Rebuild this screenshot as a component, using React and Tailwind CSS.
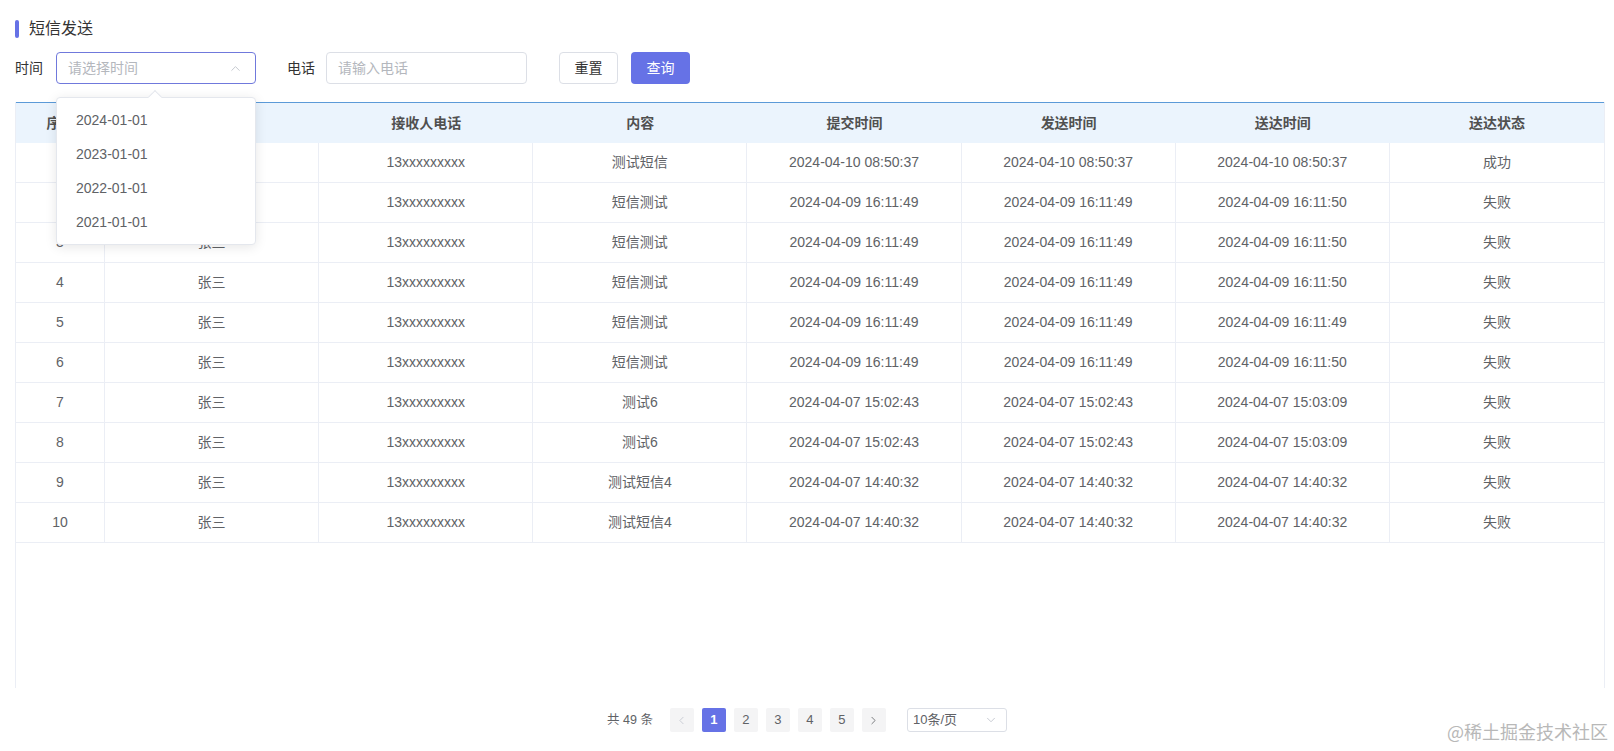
import { ChevronUp, ChevronDown, ChevronLeft, ChevronRight } from 'lucide-react';

const rows = [
  ['测试短信', '2024-04-10 08:50:37', '2024-04-10 08:50:37', '2024-04-10 08:50:37', '成功'],
  ['短信测试', '2024-04-09 16:11:49', '2024-04-09 16:11:49', '2024-04-09 16:11:50', '失败'],
  ['短信测试', '2024-04-09 16:11:49', '2024-04-09 16:11:49', '2024-04-09 16:11:50', '失败'],
  ['短信测试', '2024-04-09 16:11:49', '2024-04-09 16:11:49', '2024-04-09 16:11:50', '失败'],
  ['短信测试', '2024-04-09 16:11:49', '2024-04-09 16:11:49', '2024-04-09 16:11:49', '失败'],
  ['短信测试', '2024-04-09 16:11:49', '2024-04-09 16:11:49', '2024-04-09 16:11:50', '失败'],
  ['测试6', '2024-04-07 15:02:43', '2024-04-07 15:02:43', '2024-04-07 15:03:09', '失败'],
  ['测试6', '2024-04-07 15:02:43', '2024-04-07 15:02:43', '2024-04-07 15:03:09', '失败'],
  ['测试短信4', '2024-04-07 14:40:32', '2024-04-07 14:40:32', '2024-04-07 14:40:32', '失败'],
  ['测试短信4', '2024-04-07 14:40:32', '2024-04-07 14:40:32', '2024-04-07 14:40:32', '失败'],
];

const headers = ['序号', '接收人', '接收人电话', '内容', '提交时间', '发送时间', '送达时间', '送达状态'];
const years = ['2024-01-01', '2023-01-01', '2022-01-01', '2021-01-01'];

export default function App() {
  return (
    <div className="relative w-full h-[751px] bg-white overflow-hidden font-['Liberation_Sans','Noto_Sans_CJK_SC',sans-serif] text-[14px] text-[#606266]">
      {/* Title */}
      <div className="flex items-center h-[18px] mt-[20px] ml-[15px]">
        <div className="w-[4px] h-[18px] rounded-sm bg-[#6672e6]"></div>
        <span className="ml-[10px] text-[16px] text-[#333]">短信发送</span>
      </div>

      {/* Filters */}
      <div className="flex items-center h-[32px] mt-[14px] ml-[15px]">
        <span className="text-[#333]">时间</span>
        <div className="relative ml-[13px] w-[200px] h-[32px] border border-[#7079dc] rounded-[4px] flex items-center justify-between pl-[11px] pr-[12px]">
          <span className="text-[#b4b7bd]">请选择时间</span>
          <ChevronUp className="w-[15px] h-[15px] text-[#c0c4cc]" strokeWidth={1.5} />
        </div>
        <span className="ml-[31px] text-[#333]">电话</span>
        <div className="ml-[11px] w-[201px] h-[32px] border border-[#dcdfe6] rounded-[4px] flex items-center pl-[11px]">
          <span className="text-[#b4b7bd]">请输入电话</span>
        </div>
        <button className="ml-[32px] w-[59px] h-[32px] border border-[#dcdfe6] rounded-[4px] bg-white text-[#333]">重置</button>
        <button className="ml-[13px] w-[59px] h-[32px] rounded-[4px] bg-[#6672e6] text-white">查询</button>
      </div>

      {/* Table */}
      <div className="mt-[18px] ml-[15px] w-[1590px] h-[586px] border-x border-[#ebeef5]">
        <div className="grid grid-cols-[89px_repeat(7,minmax(0,1fr))] h-[41px] bg-[#ebf4fd] border-t border-[#5b9ad8] font-bold text-[#505050]">
          {headers.map((h) => (
            <div key={h} className="flex items-center justify-center">{h}</div>
          ))}
        </div>
        {rows.map((r, i) => (
          <div key={i} className="grid grid-cols-[89px_repeat(7,minmax(0,1fr))] h-[40px] border-b border-[#ebeef5]">
            <div className="flex items-center justify-center border-r border-[#ebeef5]">{i + 1}</div>
            <div className="flex items-center justify-center border-r border-[#ebeef5]">张三</div>
            <div className="flex items-center justify-center border-r border-[#ebeef5]">13xxxxxxxxx</div>
            <div className="flex items-center justify-center border-r border-[#ebeef5]">{r[0]}</div>
            <div className="flex items-center justify-center border-r border-[#ebeef5]">{r[1]}</div>
            <div className="flex items-center justify-center border-r border-[#ebeef5]">{r[2]}</div>
            <div className="flex items-center justify-center border-r border-[#ebeef5]">{r[3]}</div>
            <div className="flex items-center justify-center">{r[4]}</div>
          </div>
        ))}
      </div>

      {/* Pagination */}
      <div className="flex items-center justify-center h-[24px] mt-[20px] text-[13px]">
        <span className="mr-[17px] text-[12.5px] text-[#606266]">共 49 条</span>
        <div className="flex items-center gap-[8px]">
          <div className="w-[24px] h-[24px] bg-[#f4f4f5] rounded-[2px] flex items-center justify-center">
            <ChevronLeft className="w-[13px] h-[13px] text-[#c0c4cc]" strokeWidth={1.5} />
          </div>
          <div className="w-[24px] h-[24px] bg-[#6672e6] rounded-[2px] flex items-center justify-center text-white font-bold">1</div>
          {[2, 3, 4, 5].map((n) => (
            <div key={n} className="w-[24px] h-[24px] bg-[#f4f4f5] rounded-[2px] flex items-center justify-center text-[#606266]">{n}</div>
          ))}
          <div className="w-[24px] h-[24px] bg-[#f4f4f5] rounded-[2px] flex items-center justify-center">
            <ChevronRight className="w-[13px] h-[13px] text-[#606266]" strokeWidth={1.5} />
          </div>
        </div>
        <div className="ml-[21px] w-[100px] h-[24px] border border-[#dcdfe6] rounded-[3px] flex items-center justify-between pl-[5px] pr-[8px]">
          <span className="text-[#606266]">10条/页</span>
          <ChevronDown className="w-[14px] h-[14px] text-[#c0c4cc]" strokeWidth={1.5} />
        </div>
      </div>

      {/* Date dropdown */}
      <div className="absolute left-[56px] top-[97px] w-[200px] h-[148px] bg-white border border-[#e4e7ed] rounded-[4px] shadow-[0_2px_12px_rgba(0,0,0,0.1)] pt-[5px]">
        <div className="absolute -top-[6px] left-[93px] w-[10px] h-[10px] bg-white border-l border-t border-[#e4e7ed] rotate-45"></div>
        {years.map((y) => (
          <div key={y} className="h-[34px] flex items-center px-[19px] text-[#606266]">{y}</div>
        ))}
      </div>

      {/* Watermark */}
      <div className="absolute right-[6px] bottom-[6px] text-[18px] text-[#b8b8b8] font-['Noto_Sans_CJK_SC',sans-serif]">@稀土掘金技术社区</div>
    </div>
  );
}
